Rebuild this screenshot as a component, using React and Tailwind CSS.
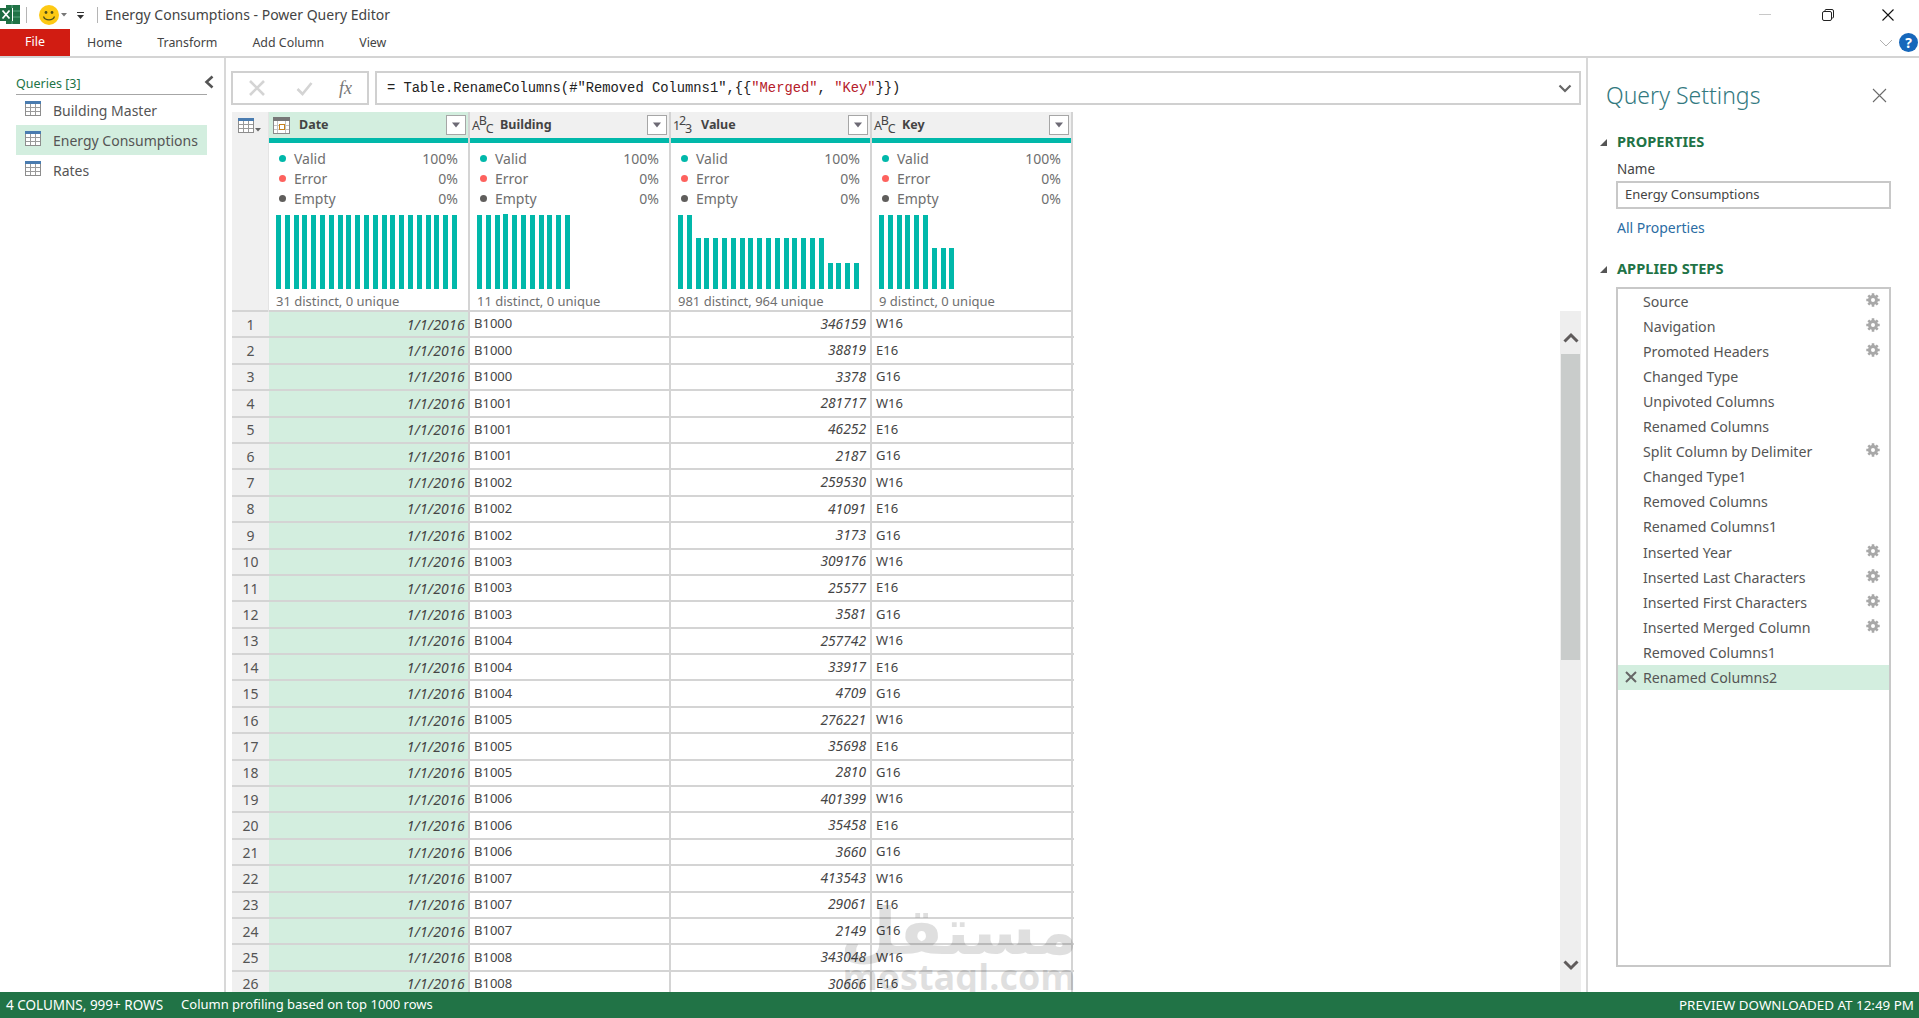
import React from "react";

const VALUES = [346159,38819,3378,281717,46252,2187,259530,41091,3173,309176,25577,3581,257742,33917,4709,276221,35698,2810,401399,35458,3660,413543,29061,2149,343048,30666];
const KEYS = ["W16","E16","G16"];
const STEPS = [
  ["Source",1],["Navigation",1],["Promoted Headers",1],["Changed Type",0],["Unpivoted Columns",0],["Renamed Columns",0],["Split Column by Delimiter",1],["Changed Type1",0],["Removed Columns",0],["Renamed Columns1",0],["Inserted Year",1],["Inserted Last Characters",1],["Inserted First Characters",1],["Inserted Merged Column",1],["Removed Columns1",0],["Renamed Columns2",0],
];
const full = 74;
const COLS = [
  { name: "Date", type: "date", distinct: "31 distinct, 0 unique", bars: Array(21).fill(full), active: true },
  { name: "Building", type: "abc", distinct: "11 distinct, 0 unique", bars: [74,74,74,75,74,74,74,74,74,74,74] },
  { name: "Value", type: "num", distinct: "981 distinct, 964 unique", bars: [74,74,...Array(15).fill(51),...Array(4).fill(26)] },
  { name: "Key", type: "abc", distinct: "9 distinct, 0 unique", bars: [74,74,74,74,74,74,41,41,41] },
];

function TableIcon({ className = "" }) {
  return (
    <svg width="16" height="15" viewBox="0 0 16 15" className={className}>
      <rect x="0.5" y="0.5" width="15" height="14" fill="#fff" stroke="#8d8d8d" />
      <rect x="0" y="0" width="16" height="3" fill="#4a7cb0" />
      <path d="M5.5 3v11M10.5 3v11M1 6.5h14M1 10.5h14" stroke="#9a9a9a" fill="none" />
    </svg>
  );
}
function DateIcon() {
  return (
    <svg width="17" height="17" viewBox="0 0 17 17" className="-ml-[1px]">
      <rect x="0.5" y="0.5" width="16" height="16" fill="#fff" stroke="#8a8a8a" />
      <rect x="0" y="0" width="17" height="4" fill="#777" />
      <path d="M4.5 4v12M12.5 4v12M1 8.5h15M1 12.5h15" stroke="#c4c4c4" fill="none" />
      <rect x="6.5" y="7.5" width="5" height="5" fill="#fff" stroke="#c8811c" />
    </svg>
  );
}
function TypeIcon({ type }) {
  if (type === "date") return <DateIcon />;
  const [a, b, c] = type === "abc" ? ["A", "B", "C"] : ["1", "2", "3"];
  return (
    <span className="flex h-[22px] w-[21px] items-start text-[12.5px] leading-none tracking-[-1.2px] text-[#444]">
      <span className="mt-[6px]">{a}</span>
      <span className="mt-[1px]">{b}</span>
      <span className="mt-[9px]">{c}</span>
    </span>
  );
}
function Gear() {
  return (
    <svg width="14" height="14" viewBox="0 0 14 14">
      <circle cx="7" cy="7" r="3.5" fill="none" stroke="#a8a8a8" strokeWidth="3" />
      <path d="M7 0.3v2.6M7 11.1v2.6M0.3 7h2.6M11.1 7h2.6M2.3 2.3l1.8 1.8M9.9 9.9l1.8 1.8M2.3 11.7l1.8-1.8M9.9 4.1l1.8-1.8" stroke="#a8a8a8" strokeWidth="2.6" />
    </svg>
  );
}
function FilterBtn() {
  return (
    <span className="flex h-[20px] w-[20px] items-center justify-center border border-[#a6a6a6] bg-white">
      <svg width="10" height="6" viewBox="0 0 10 6"><path d="M1 0.5h8L5 5.5z" fill="#6d6a75" /></svg>
    </span>
  );
}
function Triangle() {
  return <svg width="7" height="7" viewBox="0 0 7 7"><path d="M7 0v7H0z" fill="#555" /></svg>;
}

function TitleBar() {
  return (
    <div className="flex h-[29px] items-center">
      <svg width="20" height="19" viewBox="0 0 20 19" className="mb-[1px]">
        <rect x="6" y="0" width="14" height="19" fill="#217346" />
        <path d="M12 0v19M6 6h14M6 12h14" stroke="#5aa37e" />
        <rect x="0" y="3" width="13" height="13" fill="#fff" />
        <rect x="0" y="3" width="12" height="13" fill="#1c6b41" />
        <path d="M2.5 5.5l7 8M9.5 5.5l-7 8" stroke="#fff" strokeWidth="1.8" />
      </svg>
      <span className="ml-[6px] h-[16px] w-px bg-[#b5b5b5]" />
      <svg width="20" height="20" viewBox="0 0 20 20" className="ml-[12px]">
        <circle cx="10" cy="10" r="10" fill="#fdc914" />
        <circle cx="7" cy="7.5" r="1.4" fill="#4d4d1a" />
        <circle cx="13" cy="7.5" r="1.4" fill="#4d4d1a" />
        <path d="M4.5 11.5c1.5 4.5 9.5 4.5 11 0" stroke="#4d4d1a" strokeWidth="1.2" fill="none" />
      </svg>
      <svg width="6" height="4" viewBox="0 0 6 4" className="ml-[2px]"><path d="M0 0h6L3 3.5z" fill="#777" /></svg>
      <svg width="7" height="7" viewBox="0 0 7 7" className="ml-[10px] mt-[2px]">
        <path d="M0 0h7v1H0zM0 3h7L3.5 7z" fill="#333" />
      </svg>
      <span className="ml-[13px] h-[16px] w-px bg-[#b5b5b5]" />
      <span className="ml-[7px] text-[14px] text-[#444]">Energy Consumptions - Power Query Editor</span>
      <div className="ml-auto flex items-center">
        <span className="h-px w-[12px] bg-[#c8c8c8]" />
        <svg width="12" height="12" viewBox="0 0 12 12" className="ml-[51px]">
          <rect x="0.5" y="2.5" width="9" height="9" rx="1.5" fill="#fff" stroke="#222" />
          <path d="M3 2V1.5A1 1 0 0 1 4 .5h6A1.5 1.5 0 0 1 11.5 2v6a1 1 0 0 1-1 1H10" fill="none" stroke="#222" />
        </svg>
        <svg width="12" height="12" viewBox="0 0 12 12" className="ml-[48px] mr-[25px]">
          <path d="M.5.5l11 11M11.5.5l-11 11" stroke="#111" strokeWidth="1.1" />
        </svg>
      </div>
    </div>
  );
}

function Tabs() {
  return (
    <div className="flex h-[29px] items-stretch border-b-2 border-[#d4d4d4] text-[12.4px] text-[#444]">
      <span className="flex w-[70px] items-center justify-center bg-[#d11c12] text-white">File</span>
      <span className="ml-[17px] flex items-center pt-[2px]">Home</span>
      <span className="ml-[35px] flex items-center pt-[2px]">Transform</span>
      <span className="ml-[35px] flex items-center pt-[2px]">Add Column</span>
      <span className="ml-[35px] flex items-center pt-[2px]">View</span>
      <div className="ml-auto flex items-center">
        <svg width="14" height="8" viewBox="0 0 14 8"><path d="M1 1l6 6 6-6" fill="none" stroke="#b0b0b0" /></svg>
        <span className="ml-[6px] mr-[1px] flex h-[19px] w-[19px] items-center justify-center rounded-full bg-[#1667bb] text-[14px] font-bold leading-none text-white">?</span>
      </div>
    </div>
  );
}

function QueriesPane() {
  const items = ["Building Master", "Energy Consumptions", "Rates"];
  return (
    <div className="w-[226px] shrink-0 border-r-2 border-[#d8d8d8] pl-[16px] pr-[18px] pt-[17px]">
      <div className="flex h-[20px] w-[191px] items-center justify-between border-b border-[#a6a6a6] text-[12.5px] text-[#217346]">
        <span>Queries [3]</span>
      </div>
      <div className="w-[191px]">
        {items.map((n, i) => (
          <div key={n} className={`flex h-[30px] items-center pl-[9px] text-[14px] text-[#555] ${i === 1 ? "bg-[#d3eedf]" : ""}`}>
            <TableIcon className="mb-[3px]" />
            <span className="ml-[12px]">{n}</span>
          </div>
        ))}
      </div>
    </div>
  );
}

function FormulaBar() {
  return (
    <div className="flex h-[34px] gap-[6px]">
      <div className="flex w-[138px] items-center border-2 border-[#d0d0d0] pl-[15px]">
        <svg width="18" height="18" viewBox="0 0 18 18"><path d="M2 2l14 14M16 2L2 16" stroke="#d4d4d4" strokeWidth="2.6" /></svg>
        <svg width="17" height="15" viewBox="0 0 17 15" className="ml-[30px]"><path d="M1.5 8l5 5L15.5 2" fill="none" stroke="#d4d4d4" strokeWidth="2.6" /></svg>
        <span className="ml-[26px] font-['Liberation_Serif',serif] text-[18px] italic leading-none text-[#777]">fx</span>
      </div>
      <div className="flex flex-1 items-center border-2 border-[#d0d0d0] pl-[10px] pr-[7px]">
        <span className="whitespace-pre pt-[2px] font-['Liberation_Mono',monospace] text-[13.8px] text-[#222]">= Table.RenameColumns(#"Removed Columns1",{"{{"}<span className="text-[#b5202a]">"Merged"</span>, <span className="text-[#b5202a]">"Key"</span>{"}})"}</span>
        <svg width="14" height="9" viewBox="0 0 14 9" className="ml-auto"><path d="M1.5 1.5L7 7l5.5-5.5" fill="none" stroke="#666" strokeWidth="2.2" /></svg>
      </div>
    </div>
  );
}

function Column({ col }) {
  return (
    <div className="w-[201px] border-r-2 border-[#d4d4d4]">
      <div className={`flex h-[26px] items-center pl-[2px] pr-[2px] ${col.active ? "bg-[#d3eedf]" : "bg-[#f0f0f0]"}`}>
        <span className="flex w-[21px] justify-center"><TypeIcon type={col.type} /></span>
        <span className="ml-[7px] text-[12.5px] font-bold text-[#444]">{col.name}</span>
        <span className="ml-auto"><FilterBtn /></span>
      </div>
      <div className="h-[5px] bg-[#01b8aa]" />
      <div className="flex h-[169px] flex-col border-b-2 border-[#d4d4d4] pl-[7px] pr-[10px] text-[#6f6f6f]">
        {[["Valid","100%","bg-[#01b8aa]"],["Error","0%","bg-[#fd625e]"],["Empty","0%","bg-[#605e5c]"]].map(([l,p,c],i) => (
          <div key={l} className={`flex h-[20px] items-center text-[14px] ${i === 0 ? "mt-[5px]" : ""}`}>
            <span className={`ml-[3px] h-[7px] w-[7px] rounded-full ${c}`} />
            <span className="ml-[8px]">{l}</span>
            <span className="ml-auto">{p}</span>
          </div>
        ))}
        <div className="mt-[6px] flex h-[75px] shrink-0 items-end gap-[3.8px]">
          {col.bars.map((h, i) => (
            <span key={i} className="w-[5px] bg-[#01b8aa]" style={{ height: h }} />
          ))}
        </div>
        <div className="mt-[3px] whitespace-nowrap text-[13px]">{col.distinct}</div>
      </div>
    </div>
  );
}

function Grid() {
  return (
    <div className="mt-[7px] flex min-h-0 flex-1 pl-[1px]">
      <div className="min-w-0 flex-1 overflow-hidden">
        <div className="flex w-[842px]">
          <div className="w-[37px] shrink-0 border-r border-[#e4e4e4] bg-[#f0f0f0]">
            <div className="flex h-[26px] items-center pl-[6px]">
              <TableIcon />
              <svg width="6" height="4" viewBox="0 0 6 4" className="ml-[1px] mt-[9px]"><path d="M0 0h6L3 3.5z" fill="#666" /></svg>
            </div>
            <div className="h-[174px] border-b-2 border-[#d4d4d4]" />
          </div>
          {COLS.map((c) => <Column key={c.name} col={c} />)}
        </div>
        {VALUES.map((v, i) => (
          <div key={i} className="flex h-[26.4px] w-[842px] border-b-2 border-[#d4d4d4] text-[13px] text-[#444]">
            <span className="flex w-[37px] shrink-0 items-center justify-center bg-[#f0f0f0] text-[14px] text-[#555]">{i + 1}</span>
            <span className="flex w-[201px] items-center justify-end border-r-2 border-[#d4d4d4] bg-[#d3eedf] pr-[3px] text-[14px] italic tracking-[0.25px]">1/1/2016</span>
            <span className="flex w-[201px] items-center border-r-2 border-[#d4d4d4] pl-[4px]">B{1000 + Math.floor(i / 3)}</span>
            <span className="flex w-[201px] items-center justify-end border-r-2 border-[#d4d4d4] pr-[4px] text-[13.8px] italic">{v}</span>
            <span className="flex w-[201px] items-center border-r-2 border-[#d4d4d4] pl-[4px]">{KEYS[i % 3]}</span>
          </div>
        ))}
      </div>
      <div className="mb-0 mr-[5px] mt-[199px] flex w-[21px] shrink-0 flex-col items-center bg-[#eeeeee]">
        <svg width="16" height="11" viewBox="0 0 16 11" className="mt-[21px]"><path d="M1.5 9.5L8 3l6.5 6.5" fill="none" stroke="#5f5b5b" strokeWidth="3" /></svg>
        <div className="mt-[11px] h-[306px] w-[19px] bg-[#c9cccb]" />
        <svg width="16" height="11" viewBox="0 0 16 11" className="mb-[21px] mt-auto"><path d="M1.5 1.5L8 8l6.5-6.5" fill="none" stroke="#5f5b5b" strokeWidth="3" /></svg>
      </div>
    </div>
  );
}

function SettingsPane() {
  return (
    <div className="w-[333px] shrink-0 border-l-2 border-[#d8d8d8] pl-[12px]">
      <div className="flex h-[58px] items-center justify-between pr-[32px] pt-[16px]">
        <span className="ml-[6px] text-[23px] font-light text-[#33797f]">Query Settings</span>
        <svg width="15" height="15" viewBox="0 0 15 15"><path d="M1 1l13 13M14 1L1 14" stroke="#6b6b6b" strokeWidth="1.1" /></svg>
      </div>
      <div className="mt-[16px] flex h-[20px] items-center">
        <Triangle />
        <span className="ml-[10px] text-[14.6px] font-bold text-[#217346]">PROPERTIES</span>
      </div>
      <div className="ml-[17px] mt-[6px] flex h-[22px] items-center text-[13.5px] text-[#444]">Name</div>
      <div className="ml-[16px] mt-[1px] flex h-[28px] w-[275px] items-center border-2 border-[#c8c8c8] pl-[7px] text-[13px] text-[#444]">Energy Consumptions</div>
      <div className="ml-[17px] mt-[7px] flex h-[22px] items-center text-[14px] text-[#2b6ca3]">All Properties</div>
      <div className="mt-[21px] flex h-[20px] items-center">
        <Triangle />
        <span className="ml-[10px] text-[14.6px] font-bold text-[#217346]">APPLIED STEPS</span>
      </div>
      <div className="ml-[16px] mt-[8px] h-[680px] w-[275px] border-2 border-[#c8c8c8] text-[14.2px] text-[#555]">
        {STEPS.map(([n, g], i) => {
          const last = i === STEPS.length - 1;
          return (
            <div key={n} className={`flex h-[25.07px] items-center ${last ? "bg-[#d3eedf]" : ""}`}>
              <span className="flex w-[25px] justify-center">
                {last && <svg width="12" height="12" viewBox="0 0 12 12"><path d="M1 1l10 10M11 1L1 11" stroke="#666" strokeWidth="2" /></svg>}
              </span>
              <span>{n}</span>
              {g ? <span className="mb-[3px] ml-auto mr-[9px] flex"><Gear /></span> : null}
            </div>
          );
        })}
      </div>
    </div>
  );
}

export default function App() {
  return (
    <div className="relative flex h-[1018px] w-[1919px] flex-col overflow-hidden bg-white font-['Noto_Sans',sans-serif]">
      <TitleBar />
      <Tabs />
      <div className="flex min-h-0 flex-1">
        <QueriesPane />
        <div className="flex min-w-0 flex-1 flex-col pl-[5px] pt-[13px]">
          <div className="pr-[5px]"><FormulaBar /></div>
          <Grid />
        </div>
        <SettingsPane />
      </div>
      <div className="relative z-10 flex h-[26px] shrink-0 items-center bg-[#217346] pl-[6px] pr-[5px] text-white">
        <span className="text-[13.5px]">4 COLUMNS, 999+ ROWS</span>
        <span className="ml-[18px] text-[13px]">Column profiling based on top 1000 rows</span>
        <span className="ml-auto text-[13.4px]">PREVIEW DOWNLOADED AT 12:49 PM</span>
      </div>
      <svg width="12" height="14" viewBox="0 0 12 14" className="absolute left-[203px] top-[75px]"><path d="M9.5 1.5L3.5 7l6 5.5" fill="none" stroke="#555" strokeWidth="2.6" /></svg>
      <div className="pointer-events-none absolute left-[845px] top-[902px] flex w-[228px] flex-col items-center whitespace-nowrap text-black opacity-[0.12]">
        <span dir="rtl" className="font-['DejaVu_Sans',sans-serif] text-[65px] font-bold leading-[60px]">مستقل</span>
        <span className="font-['Open_Sans',sans-serif] text-[36px] font-bold leading-[30px]">mostaql.com</span>
      </div>
    </div>
  );
}
